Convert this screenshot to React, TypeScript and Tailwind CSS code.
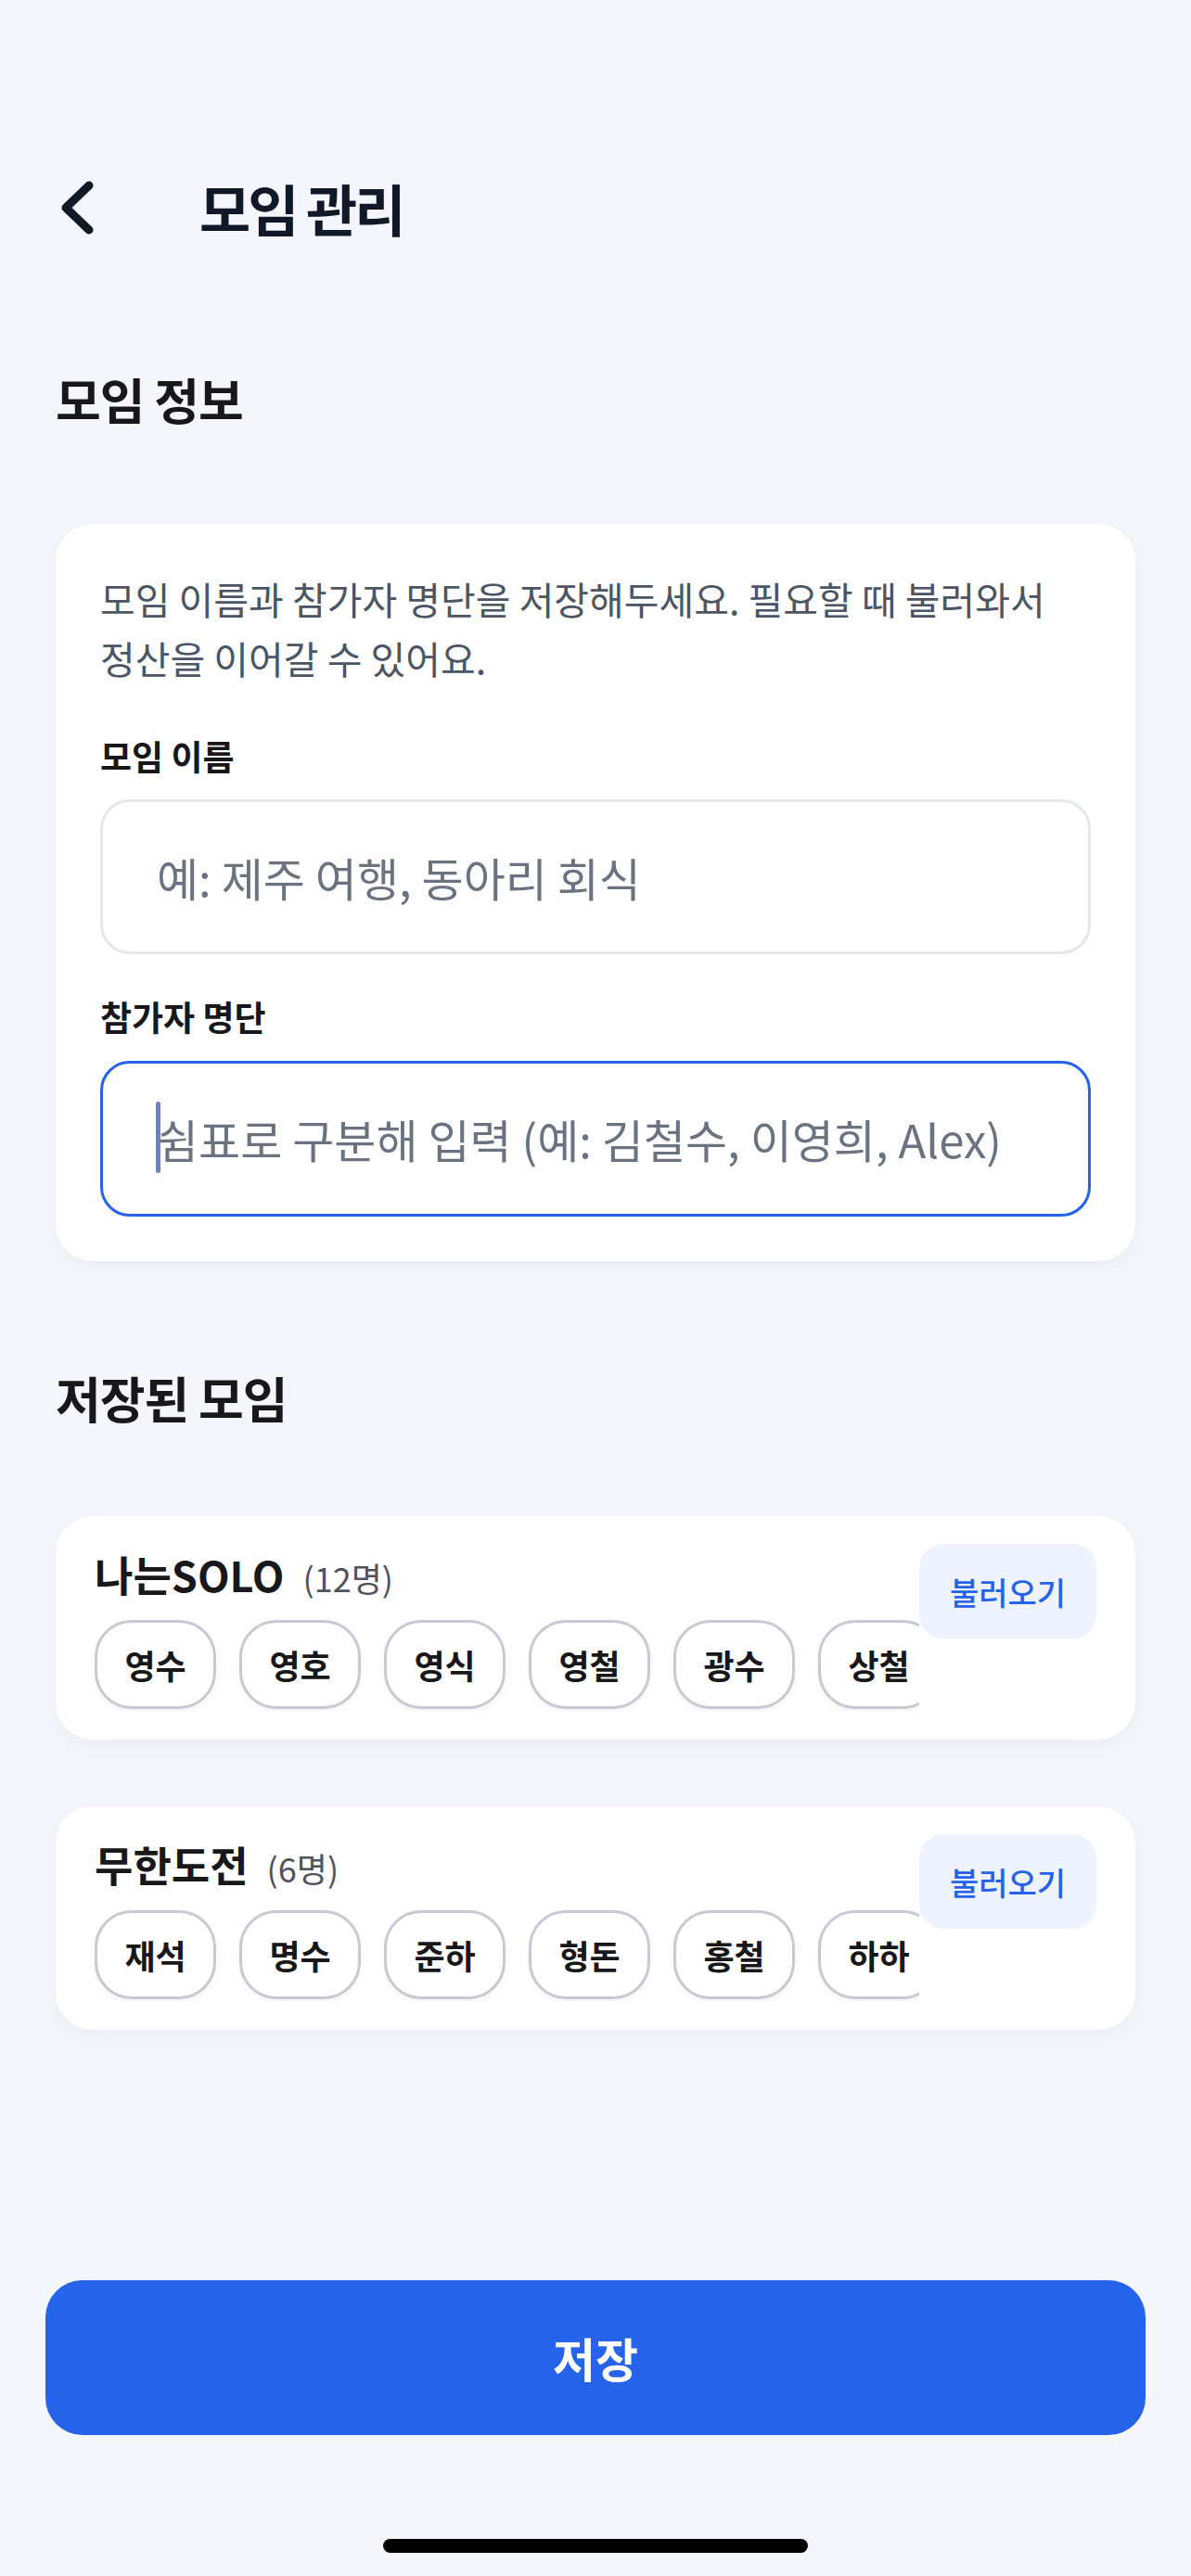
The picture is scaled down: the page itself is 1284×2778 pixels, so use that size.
import React from "react";

const FONT = { fontFamily: '"Noto Sans CJK KR", "Noto Sans", sans-serif' };

type Group = { name: string; count: number; members: string[] };

const groups: Group[] = [
  { name: "나는SOLO", count: 12, members: ["영수", "영호", "영식", "영철", "광수", "상철", "영자", "옥순"] },
  { name: "무한도전", count: 6, members: ["재석", "명수", "준하", "형돈", "홍철", "하하"] },
];

function GroupCard({ g }: { g: Group }) {
  return (
    <div className="mx-[60px] flex rounded-[40px] bg-white px-[42px] pb-[31px] pt-[30px] shadow-[0_6px_20px_rgba(20,30,60,0.04)]">
      <div className="min-w-0 flex-1">
        <div className="mt-[6px] flex h-[54px] items-baseline">
          <span className="text-[45px] font-semibold leading-[54px] text-[#18181b]">{g.name}</span>
          <span className="ml-[20px] text-[36px] leading-[54px] text-[#52525b]">({g.count}명)</span>
        </div>
        <div className="mt-[22px] flex gap-[25px] overflow-hidden pb-[2px]">
          {g.members.map((m) => (
            <div
              key={m}
              className="flex h-[96px] w-[131px] shrink-0 items-center justify-center rounded-[40px] border-[3px] border-[#c9c9d4] bg-white text-[36px] font-semibold text-[#18181b] shadow-[0_3px_6px_rgba(0,0,0,0.05)]"
            >
              {m}
            </div>
          ))}
        </div>
      </div>
      <div className="flex h-[102px] w-[191px] shrink-0 items-center justify-center rounded-[26px] bg-[#eef3ff] text-[34px] font-medium text-[#2563eb]">
        불러오기
      </div>
    </div>
  );
}

export default function App() {
  return (
    <div className="flex min-h-[2778px] flex-col bg-[#f5f6fb]" style={FONT}>
      {/* Header */}
      <div className="mt-[189px] flex h-[70px] items-center pl-[60px]">
        <svg width="45" height="70" viewBox="0 0 45 70" fill="none">
          <path d="M36 11 L11 35 L36 59" stroke="#111827" strokeWidth="9" strokeLinecap="round" strokeLinejoin="round" />
        </svg>
        <h1 className="ml-[110px] text-[60px] font-bold leading-[70px] tracking-[-0.05em] text-[#111827]">모임 관리</h1>
      </div>

      {/* Section: 모임 정보 */}
      <h2 className="mt-[141px] px-[60px] text-[53px] font-bold leading-[60px] tracking-[-0.02em] text-[#18181b]">모임 정보</h2>

      <div className="mx-[60px] mt-[105px] rounded-[40px] bg-white p-[48px] shadow-[0_6px_20px_rgba(20,30,60,0.04)]">
        <p className="break-keep text-[41px] leading-[64px] text-[#4b5563]">
          모임 이름과 참가자 명단을 저장해두세요. 필요할 때 불러와서 정산을 이어갈 수 있어요.
        </p>
        <div className="mt-[50px] text-[37px] font-semibold leading-[48px] text-[#18181b]">모임 이름</div>
        <div className="mt-[23px] flex h-[167px] items-center rounded-[32px] border-[3px] border-[#e5e7eb] bg-white pl-[58px]">
          <input
            className="w-full bg-transparent text-[49px] text-[#111827] outline-none placeholder:text-[#6b7280]"
            placeholder="예: 제주 여행, 동아리 회식"
            readOnly
          />
        </div>
        <div className="mt-[43px] text-[37px] font-semibold leading-[48px] text-[#18181b]">참가자 명단</div>
        <div className="relative mt-[24px] flex h-[168px] items-center rounded-[32px] border-[3px] border-[#2563eb] bg-white pl-[58px]">
          <input
            className="w-full bg-transparent text-[49px] text-[#111827] outline-none placeholder:text-[#6b7280]"
            placeholder="쉼표로 구분해 입력 (예: 김철수, 이영희, Alex)"
            readOnly
          />
          <div className="absolute left-[57px] top-[41px] h-[77px] w-[5px] rounded-full bg-[#7382b3]" />
        </div>
      </div>

      {/* Section: 저장된 모임 */}
      <h2 className="mt-[117px] px-[60px] text-[53px] font-bold leading-[60px] tracking-[-0.02em] text-[#18181b]">저장된 모임</h2>

      <div className="mt-[98px] flex flex-col gap-[72px]">
        {groups.map((g) => (
          <GroupCard key={g.name} g={g} />
        ))}
      </div>

      <div className="mx-[49px] mt-[270px] flex h-[167px] items-center justify-center rounded-[40px] bg-[#2563eb] text-[50px] font-semibold text-white">
        저장
      </div>

      <div className="mx-auto mt-[112px] h-[15px] w-[458px] rounded-full bg-black" />
    </div>
  );
}
